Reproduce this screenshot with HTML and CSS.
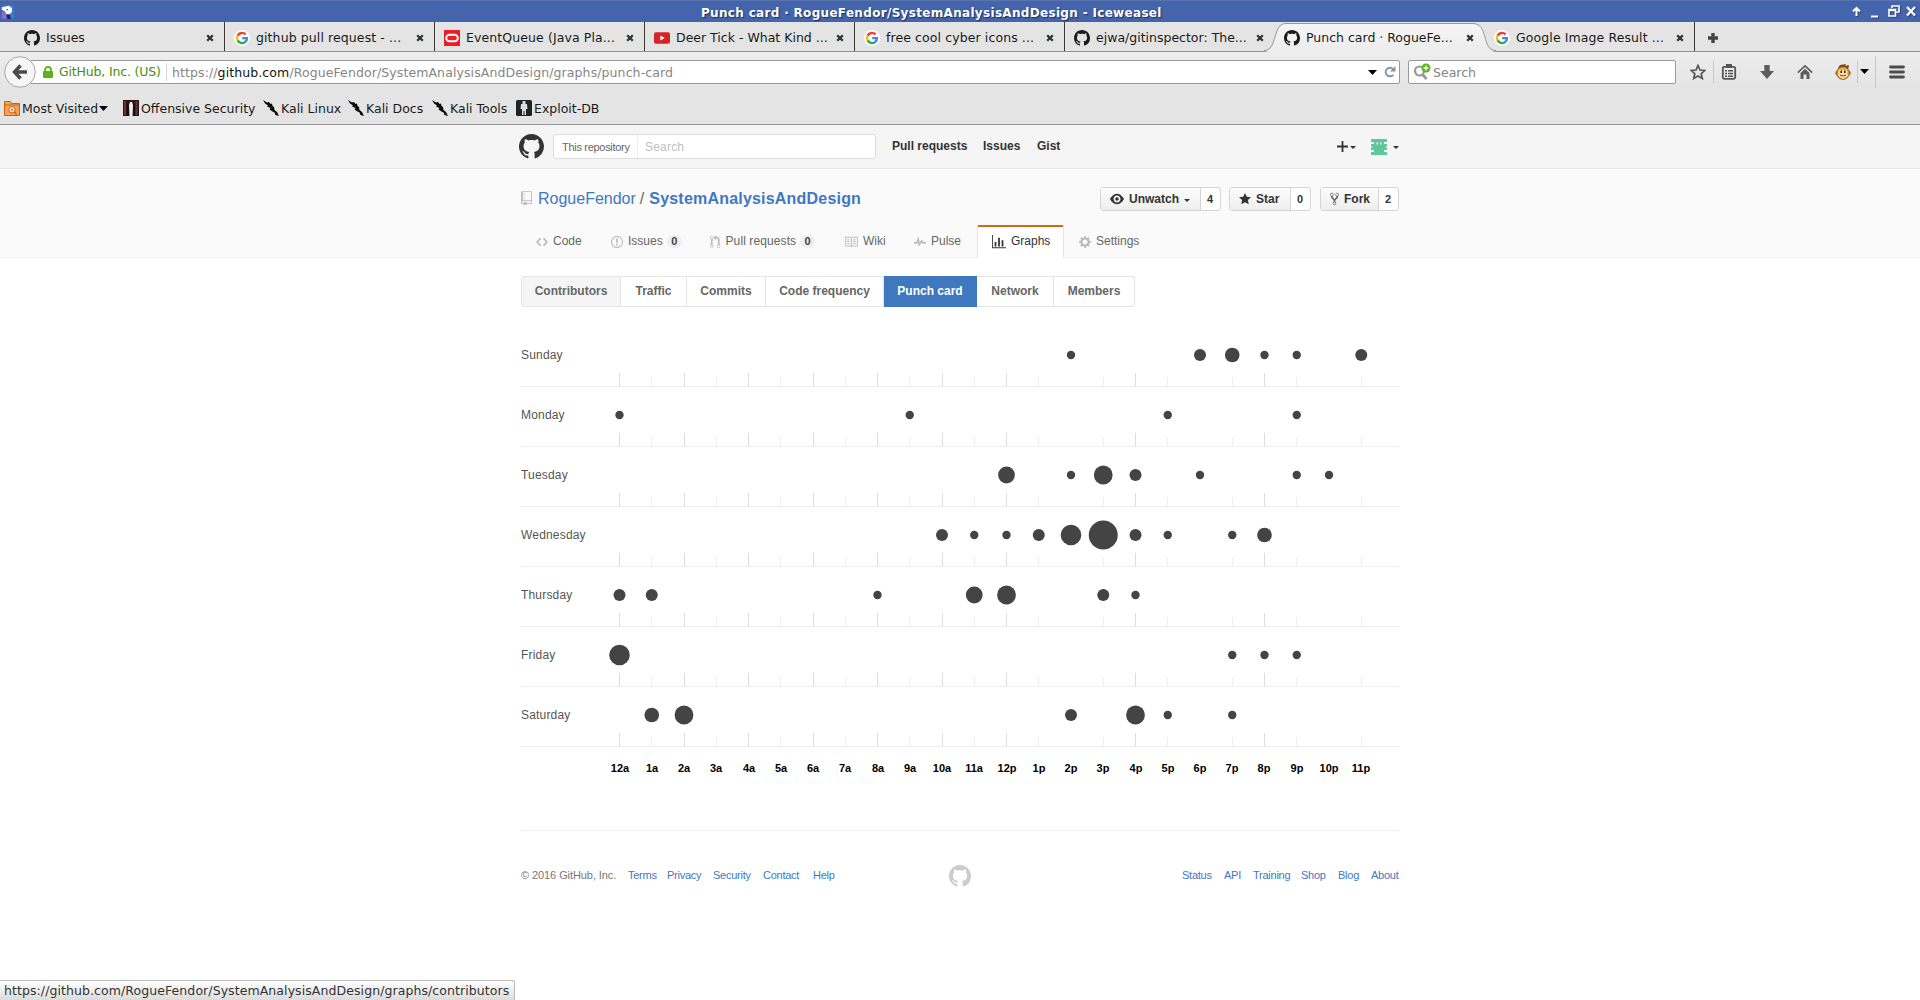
FILE: index.html
```html
<!DOCTYPE html>
<html lang="en">
<head>
<meta charset="utf-8">
<title>Punch card · RogueFendor/SystemAnalysisAndDesign</title>
<link rel="stylesheet" href="styles.css">
</head>
<body>
<svg class="sprite">
  <symbol id="mark" viewBox="0 0 16 16"><path d="M8 0C3.58 0 0 3.58 0 8c0 3.54 2.29 6.53 5.47 7.59.4.07.55-.17.55-.38 0-.19-.01-.82-.01-1.49-2.01.37-2.53-.49-2.69-.94-.09-.23-.48-.94-.82-1.13-.28-.15-.68-.52-.01-.53.63-.01 1.08.58 1.23.82.72 1.21 1.87.87 2.33.66.07-.52.28-.87.51-1.07-1.78-.2-3.64-.89-3.64-3.95 0-.87.31-1.59.82-2.15-.08-.2-.36-1.02.08-2.12 0 0 .67-.21 2.2.82.64-.18 1.32-.27 2-.27.68 0 1.36.09 2 .27 1.53-1.04 2.2-.82 2.2-.82.44 1.1.16 1.92.08 2.12.51.56.82 1.27.82 2.15 0 3.07-1.87 3.75-3.65 3.95.29.25.54.73.54 1.48 0 1.07-.01 1.93-.01 2.2 0 .21.15.46.55.38A8.013 8.013 0 0016 8c0-4.42-3.58-8-8-8z"/></symbol>
  <symbol id="google" viewBox="0 0 16 16"><circle cx="8" cy="8" r="8" fill="#fff"/><g fill="none" stroke-width="2.4"><path stroke="#ea4335" d="M3.6 5.6A5 5 0 0 1 11.6 4.4"/><path stroke="#fbbc05" d="M3.6 10.4A5 5 0 0 1 3.6 5.6"/><path stroke="#34a853" d="M11.4 11.8A5 5 0 0 1 3.6 10.4"/><path stroke="#4285f4" d="M8.2 8.1H13A5 5 0 0 1 11.3 11.8"/></g></symbol>
  <symbol id="oracle" viewBox="0 0 16 16"><path fill="#ee1c25" d="M0 0h16v16H0z"/><rect x="2.2" y="4.7" width="11.6" height="6.6" rx="3.3" fill="none" stroke="#fff" stroke-width="2"/></symbol>
  <symbol id="youtube" viewBox="0 0 16 16"><rect y="2.3" width="16" height="11.5" rx="2" fill="#d42428"/><path fill="#fff" d="M6.4 5.6v4.8L10.6 8z"/></symbol>
  <symbol id="close" viewBox="0 0 8 8"><path d="M1.2 1.2l5.6 5.6M6.8 1.2L1.2 6.8" stroke="#2e3436" stroke-width="2.3"/></symbol>
  <symbol id="kali" viewBox="0 0 16 16"><path fill="#0a0a0a" d="M0 0l4 2.500L6 2l1.500 2L9 3.500l.5 2.500 1.500 1 .5 3 2.500 2L16 16l-3.500-1-1-2.500-2-1L6.500 9.500l1-1.500L4 6.500l1-1L2 3.500z"/></symbol>
  <symbol id="repo" viewBox="0 0 12 16"><path d="M4 9H3V8h1v1zm0-3H3v1h1V6zm0-2H3v1h1V4zm0-2H3v1h1V2zm8-1v12c0 .55-.45 1-1 1H6v2l-1.500-1.500L3 16v-2H1c-.55 0-1-.45-1-1V1c0-.55.45-1 1-1h10c.55 0 1 .45 1 1zm-1 10H1v2h2v-1h3v1h5v-2zm0-10H2v9h9V1z"/></symbol>
  <symbol id="eye" viewBox="0 0 16 16"><path d="M8.060 2C3 2 0 8 0 8s3 6 8.060 6C13 14 16 8 16 8s-3-6-7.940-6zM8 12c-2.200 0-4-1.780-4-4 0-2.200 1.800-4 4-4 2.220 0 4 1.800 4 4 0 2.220-1.780 4-4 4zm2-4c0 1.110-.89 2-2 2-1.110 0-2-.89-2-2 0-1.110.89-2 2-2 1.110 0 2 .89 2 2z"/></symbol>
  <symbol id="star" viewBox="0 0 14 16"><path d="M14 6l-4.900-.64L7 1 4.900 5.360 0 6l3.600 3.260L2.670 14 7 11.670 11.330 14l-.93-4.740z"/></symbol>
  <symbol id="fork" viewBox="0 0 10 16"><path d="M8 1a1.993 1.993 0 0 0-1 3.720V6L5 8 3 6V4.720A1.993 1.993 0 0 0 2 1a1.993 1.993 0 0 0-1 3.720V6.500l3 3v1.780A1.993 1.993 0 0 0 5 15a1.993 1.993 0 0 0 1-3.720V9.500l3-3V4.720A1.993 1.993 0 0 0 8 1zM2 4.200C1.340 4.200.8 3.650.8 3c0-.65.55-1.200 1.200-1.200.65 0 1.200.55 1.200 1.200 0 .65-.55 1.200-1.200 1.200zm3 10c-.66 0-1.200-.55-1.200-1.200 0-.65.55-1.200 1.200-1.200.65 0 1.200.55 1.200 1.200 0 .65-.55 1.200-1.200 1.200zm3-10c-.66 0-1.200-.55-1.200-1.200 0-.65.55-1.200 1.200-1.200.65 0 1.200.55 1.200 1.200 0 .65-.55 1.200-1.200 1.200z"/></symbol>
  <symbol id="code" viewBox="0 0 14 16"><path d="M9.500 3L8 4.500 11.500 8 8 11.500 9.500 13 14 8 9.500 3zm-5 0L0 8l4.500 5L6 11.500 2.500 8 6 4.500 4.500 3z"/></symbol>
  <symbol id="issue" viewBox="0 0 14 16"><path d="M7 2.300c3.140 0 5.700 2.560 5.700 5.700s-2.560 5.700-5.700 5.700A5.710 5.710 0 0 1 1.300 8c0-3.140 2.560-5.700 5.700-5.700zM7 1C3.140 1 0 4.140 0 8s3.140 7 7 7 7-3.140 7-7-3.140-7-7-7zm1 3H6v5h2V4zm0 6H6v2h2v-2z"/></symbol>
  <symbol id="pull" viewBox="0 0 12 16"><path d="M11 11.280V5c-.03-.78-.34-1.470-.94-2.060C9.460 2.350 8.780 2.030 8 2H7V0L4 3l3 3V4h1c.27.02.48.11.69.31.21.2.3.42.31.69v6.280A1.993 1.993 0 0 0 10 15a1.993 1.993 0 0 0 1-3.720zm-1 2.920c-.66 0-1.200-.55-1.200-1.200 0-.65.55-1.200 1.200-1.200.65 0 1.200.55 1.200 1.200 0 .65-.55 1.200-1.200 1.200zM4 3c0-1.110-.89-2-2-2a1.993 1.993 0 0 0-1 3.720v6.560A1.993 1.993 0 0 0 2 15a1.993 1.993 0 0 0 1-3.720V4.720c.59-.34 1-.98 1-1.720zm-.8 10c0 .66-.55 1.200-1.200 1.200-.65 0-1.200-.55-1.200-1.200 0-.65.55-1.200 1.200-1.200.65 0 1.200.55 1.200 1.200zM2 4.200C1.340 4.200.8 3.650.8 3c0-.65.55-1.200 1.200-1.200.65 0 1.200.55 1.200 1.200 0 .65-.55 1.200-1.200 1.200z"/></symbol>
  <symbol id="book" viewBox="0 0 16 16"><path d="M3 5h4v1H3V5zm0 3h4V7H3v1zm0 2h4V9H3v1zm11-5h-4v1h4V5zm0 2h-4v1h4V7zm0 2h-4v1h4V9zm2-6v9c0 .55-.45 1-1 1H9.500l-1 1-1-1H2c-.55 0-1-.45-1-1V3c0-.55.45-1 1-1h5.500l1 1 1-1H15c.55 0 1 .45 1 1zm-8 .5L7.500 3H2v9h6V3.500zm7-.5H9.500l-.5.5V12h6V3z"/></symbol>
  <symbol id="pulse" viewBox="0 0 14 16"><path d="M11.500 8L8.800 5.400 6.600 8.500 5.500 1.600 2.380 8H0v2h3.600l.9-1.800.9 5.400L9 8.500l1.600 1.500H14V8z"/></symbol>
  <symbol id="graph" viewBox="0 0 16 16"><path d="M16 14v1H0V0h1v14h15zM5 13H3V8h2v5zm4 0H7V3h2v10zm4 0h-2V6h2v7z"/></symbol>
  <symbol id="gear" viewBox="0 0 14 16"><path d="M14 8.770v-1.600l-1.940-.64-.45-1.090.88-1.840-1.130-1.130-1.810.91-1.090-.45-.69-1.920h-1.600l-.63 1.940-1.110.45-1.840-.88-1.130 1.130.91 1.810-.45 1.090L0 7.230v1.590l1.940.64.45 1.090-.88 1.840 1.130 1.130 1.810-.91 1.090.45.69 1.920h1.590l.63-1.940 1.110-.45 1.840.88 1.130-1.130-.92-1.810.47-1.090L14 8.750v.02zM7 11c-1.660 0-3-1.340-3-3s1.340-3 3-3 3 1.340 3 3-1.340 3-3 3z"/></symbol>
</svg>

<header class="titlebar">
  <svg class="app-icon" viewBox="0 0 16 18"><rect width="16" height="18" rx="2" fill="#3a7bc8"/><path fill="#8d6cc9" d="M0 9h6v9H0z"/><path fill="#1c2a6b" d="M6 11l4 1 2 6H7z"/><path fill="#fff" d="M0 3l5-1 4-1 4 3v5l-3 3H6L4 8 0 6z"/><circle cx="7" cy="6" r=".9" fill="#223"/></svg>
  <span class="title">Punch card · RogueFendor/SystemAnalysisAndDesign - Iceweasel</span>
  <svg class="window-buttons" viewBox="0 0 68 14"><g fill="none" stroke="#fff" stroke-width="2"><path d="M6.500 12V4M3 7.500L6.500 4 10 7.500"/><path d="M21 12.500h7"/><path stroke-width="1.600" d="M42 4V2h7v6h-2.500M39 5.500h6.500V12H39zM39 6.500h6"/><path stroke-width="2.300" d="M57 3l8 8.500M65 3l-8 8.500"/></g></svg>
</header>

<nav class="tabs">
  <div class="tab"><svg class="fav"><use href="#mark"/></svg><span class="label">Issues</span><svg class="x"><use href="#close"/></svg></div>
  <div class="tab"><svg class="fav"><use href="#google"/></svg><span class="label wide">github pull request - ...</span><svg class="x"><use href="#close"/></svg></div>
  <div class="tab"><svg class="fav"><use href="#oracle"/></svg><span class="label wide">EventQueue (Java Pla...</span><svg class="x"><use href="#close"/></svg></div>
  <div class="tab"><svg class="fav"><use href="#youtube"/></svg><span class="label">Deer Tick - What Kind ...</span><svg class="x"><use href="#close"/></svg></div>
  <div class="tab"><svg class="fav"><use href="#google"/></svg><span class="label wide">free cool cyber icons ...</span><svg class="x"><use href="#close"/></svg></div>
  <div class="tab before-active"><svg class="fav"><use href="#mark"/></svg><span class="label">ejwa/gitinspector: The...</span><svg class="x"><use href="#close"/></svg></div>
  <div class="tab active">
    <svg class="tab-shape" viewBox="0 0 240 30"><defs><linearGradient id="tabfill" x1="0" y1="0" x2="0" y2="1"><stop offset="0" stop-color="#f6f6f6"/><stop offset="1" stop-color="#ececec"/></linearGradient></defs><path fill="url(#tabfill)" d="M0 30C14 29 8 1.500 22 1.500H210C226 1.500 217 29 232 30z"/><path fill="none" stroke="#979797" d="M0 28.500C14 28.500 8 1.500 22 1.500H209C225 1.500 217 28.500 232 28.500"/></svg>
    <svg class="fav"><use href="#mark"/></svg><span class="label">Punch card · RogueFe...</span><svg class="x"><use href="#close"/></svg></div>
  <div class="tab"><svg class="fav"><use href="#google"/></svg><span class="label wide">Google Image Result ...</span><svg class="x"><use href="#close"/></svg></div>
  <svg class="new-tab" viewBox="0 0 10 10"><path fill="#444" d="M3.300 0h3.400v3.300H10v3.400H6.700V10H3.300V6.700H0V3.300h3.300z"/></svg>
</nav>

<div class="toolbar">
  <svg class="back" viewBox="0 0 32 32"><circle cx="16" cy="16" r="15.300" fill="#f6f6f6" stroke="#a2a6ab"/><path fill="none" stroke="#4c4c4c" stroke-width="3.400" d="M16.500 9.500L10.500 16l6 6.500M11 16h12"/></svg>
  <div class="urlbar">
    <svg class="lock" viewBox="0 0 10 12"><rect y="5" width="10" height="7" rx="1" fill="#5db11b"/><path fill="none" stroke="#5db11b" stroke-width="1.800" d="M2 6V4a3 3 0 0 1 6 0v2"/></svg>
    <span class="owner">GitHub, Inc. (US)</span>
    <span class="url">https://<b>github.com</b>/RogueFendor/SystemAnalysisAndDesign/graphs/punch-card</span>
    <svg class="drop" viewBox="0 0 9 5"><path d="M0 0h9L4.500 5z"/></svg>
    <svg class="reload" viewBox="0 0 12 12"><path fill="none" stroke="#8796a5" stroke-width="2" d="M9.300 8.800A4.300 4.300 0 1 1 9 3"/><path fill="#8796a5" d="M11.500 0v5.500H6z"/></svg>
  </div>
  <div class="searchbar">
    <svg class="lens" viewBox="0 0 18 18"><circle cx="6.500" cy="8" r="4.500" fill="none" stroke="#999" stroke-width="2.200"/><path stroke="#999" stroke-width="2.800" d="M9.500 11.500l4 4.500"/><circle cx="13" cy="5" r="4.500" fill="#5cb616"/><path stroke="#fff" stroke-width="1.300" d="M13 2.500v5M10.500 5h5"/></svg>
    <span>Search</span>
  </div>
  <div class="tools">
    <svg viewBox="0 0 16 16"><path fill="none" stroke="#555" stroke-width="1.700" d="M8 1.500l2 4.500 4.800.5-3.600 3.200 1.100 4.800L8 12l-4.300 2.500 1.100-4.800L1.200 6.500 6 6z"/></svg>
    <i class="sep"></i>
    <svg viewBox="0 0 16 16"><rect x="1.800" y="2.800" width="12.400" height="12" rx="1.500" fill="none" stroke="#555" stroke-width="1.800"/><path fill="#555" d="M5 0h6v4H5zM4 6h2v1.500H4zM7 6h5v1.500H7zM4 8.700h2v1.500H4zM7 8.700h5v1.500H7zM4 11.400h2v1.500H4zM7 11.400h5v1.500H7z"/></svg>
    <svg viewBox="0 0 16 16"><path fill="#5c5c5c" d="M5.300 1h5.400v6H15L8 15 1 7h4.300z"/></svg>
    <svg viewBox="0 0 16 16"><path fill="none" stroke="#5c5c5c" stroke-width="1.700" d="M.8 8.700L8 2l7.200 6.700"/><path fill="#5c5c5c" d="M3.500 9L8 4.800 12.500 9v6H9.500v-4.500h-3V15h-3z"/></svg>
    <svg viewBox="0 0 16 16"><path fill="#7a4415" d="M3 4l2-3 6-1-1 2 4-1-1 5z"/><circle cx="2" cy="9" r="2" fill="#c98735"/><circle cx="14" cy="9" r="2" fill="#c98735"/><circle cx="8" cy="9" r="6.300" fill="#eda84a" stroke="#8b5318"/><path fill="#ffe2a3" d="M4 6h8l.500 6-4.500 3-4.500-3z"/><path fill="#222" d="M5.500 6.500H7V9H5.500zM9 6.500h1.500V9H9z"/><path fill="none" stroke="#8b3c10" d="M5 11q3 2 6 0"/></svg>
    <i class="sep"></i>
    <svg class="drop" viewBox="0 0 9 5"><path d="M0 0h9L4.500 5z"/></svg>
    <i class="sep tall"></i>
    <svg viewBox="0 0 16 16"><path stroke="#4c4c4c" stroke-width="2.800" stroke-linecap="round" d="M1.500 3h13M1.500 8h13M1.500 13h13"/></svg>
  </div>
</div>

<div class="bookmarks">
  <a><svg viewBox="0 0 16 16"><path fill="#f3a45a" stroke="#c8640f" d="M.5 15.500v-14h6l1 2h8v12z"/><path stroke="#c8640f" d="M1 5h14"/><circle cx="8" cy="9.800" r="3.200" fill="#fde3c8" stroke="#c8640f"/><circle cx="8" cy="9.800" r="1" fill="#c8640f"/><path stroke="#c8640f" stroke-width="1.500" d="M10.500 12l2 2.500"/></svg><span>Most Visited</span><svg class="drop" viewBox="0 0 9 5"><path d="M0 0h9L4.500 5z"/></svg></a>
  <a><svg viewBox="0 0 16 16"><path fill="#2a1414" d="M0 0h16v16H0z"/><path fill="#6b3430" d="M1 1h2v14H1zM12.500 1h2v14h-2z"/><path fill="#eee" d="M7 2h2l1 3-.5 11h-3L6 5z"/><path fill="#111" d="M4 4h1.500v12H4zM10.500 4H12v12h-1.500z"/></svg><span>Offensive Security</span></a>
  <a><svg><use href="#kali"/></svg><span>Kali Linux</span></a>
  <a><svg><use href="#kali"/></svg><span>Kali Docs</span></a>
  <a><svg><use href="#kali"/></svg><span>Kali Tools</span></a>
  <a><svg viewBox="0 0 16 16"><rect width="16" height="16" rx="1.500" fill="#202225"/><path fill="#ddd" d="M6.500 1h3v3H11l.500 5h-1.500v6H8.500v-4h-1v4H6V9H4.500L5 4h1.500z"/></svg><span>Exploit-DB</span></a>
</div>

<div class="gh-header">
  <div class="wrap">
    <svg class="logo"><use href="#mark"/></svg>
    <div class="gh-search"><span class="scope">This repository</span><span class="field">Search</span></div>
    <nav class="gh-nav"><a>Pull requests</a><a>Issues</a><a>Gist</a></nav>
    <div class="user">
      <svg class="plus" viewBox="0 0 11 11"><path fill="#333" d="M4.600 0h1.800v4.600H11v1.800H6.400V11H4.600V6.400H0V4.600h4.600z"/></svg><i class="caret"></i>
      <svg class="avatar" viewBox="0 0 16 16"><path fill="#5fc79b" d="M0 0h16v3h-3v2h3v6h-3v2h3v3H0v-3h3v-2H0V5h3V3H0z"/><path fill="#f5f5f5" d="M5.500 3.500h1.500v2H5.500zM9 3.500h1.500v2H9zM0 7.500h1.500v1H0zM14.500 7.500H16v1h-1.500z"/></svg><i class="caret"></i>
    </div>
  </div>
</div>

<div class="repo-head">
  <div class="wrap repo-title">
    <svg class="repo-icon"><use href="#repo"/></svg>
    <h1><a>RogueFendor</a><span>/</span><a class="name">SystemAnalysisAndDesign</a></h1>
    <div class="actions">
      <div class="btn-group watch"><span class="btn"><svg class="w14"><use href="#eye"/></svg>Unwatch<i class="caret"></i></span><span class="count">4</span></div>
      <div class="btn-group stars"><span class="btn"><svg class="w12"><use href="#star"/></svg>Star</span><span class="count">0</span></div>
      <div class="btn-group forks"><span class="btn"><svg class="w9"><use href="#fork"/></svg>Fork</span><span class="count">2</span></div>
    </div>
  </div>
  <nav class="wrap repo-nav">
    <a><svg class="w12"><use href="#code"/></svg>Code</a>
    <a><svg class="w12"><use href="#issue"/></svg>Issues<em>0</em></a>
    <a><svg class="w10"><use href="#pull"/></svg>Pull requests<em>0</em></a>
    <a><svg class="w14"><use href="#book"/></svg>Wiki</a>
    <a><svg class="w12"><use href="#pulse"/></svg>Pulse</a>
    <a class="selected"><svg class="w14"><use href="#graph"/></svg>Graphs</a>
    <a><svg class="w12"><use href="#gear"/></svg>Settings</a>
  </nav>
</div>

<main class="wrap">
  <nav class="subnav"><a class="hover">Contributors</a><a>Traffic</a><a>Commits</a><a>Code frequency</a><a class="selected">Punch card</a><a>Network</a><a>Members</a></nav>

  <svg class="punchcard" viewBox="0 0 878 470">
    <defs>
      <g id="axis">
        <path class="rule" d="M0 59.500H878"/>
        <path class="even" d="M98.500 46v13M163.500 46v13M227.500 46v13M292.500 46v13M356.500 46v13M421.500 46v13M485.500 46v13M614.500 46v13M743.500 46v13"/>
        <path class="odd" d="M130.500 50v9M195.500 50v9M259.500 50v9M324.500 50v9M388.500 50v9M453.500 50v9M517.500 50v9M582.500 50v9M646.500 50v9M711.500 50v9M775.500 50v9M840.500 50v9"/>
      </g>
    </defs>
    <g transform="translate(0 0)"><text y="32">Sunday</text><use href="#axis"/><circle cx="550" cy="28" r="4.200"/><circle cx="679" cy="28" r="6"/><circle cx="711.250" cy="28" r="7.300"/><circle cx="743.500" cy="28" r="4.200"/><circle cx="775.750" cy="28" r="4.200"/><circle cx="840.250" cy="28" r="6"/></g>
    <g transform="translate(0 60)"><text y="32">Monday</text><use href="#axis"/><circle cx="98.500" cy="28" r="4.200"/><circle cx="388.750" cy="28" r="4.200"/><circle cx="646.750" cy="28" r="4.200"/><circle cx="775.750" cy="28" r="4.200"/></g>
    <g transform="translate(0 120)"><text y="32">Tuesday</text><use href="#axis"/><circle cx="485.500" cy="28" r="8.400"/><circle cx="550" cy="28" r="4.200"/><circle cx="582.250" cy="28" r="9.400"/><circle cx="614.500" cy="28" r="6"/><circle cx="679" cy="28" r="4.200"/><circle cx="775.750" cy="28" r="4.200"/><circle cx="808" cy="28" r="4.200"/></g>
    <g transform="translate(0 180)"><text y="32">Wednesday</text><use href="#axis"/><circle cx="421" cy="28" r="6"/><circle cx="453.250" cy="28" r="4.200"/><circle cx="485.500" cy="28" r="4.200"/><circle cx="517.750" cy="28" r="6"/><circle cx="550" cy="28" r="10.300"/><circle cx="582.250" cy="28" r="14.500"/><circle cx="614.500" cy="28" r="6"/><circle cx="646.750" cy="28" r="4.200"/><circle cx="711.250" cy="28" r="4.200"/><circle cx="743.500" cy="28" r="7.300"/></g>
    <g transform="translate(0 240)"><text y="32">Thursday</text><use href="#axis"/><circle cx="98.500" cy="28" r="6"/><circle cx="130.750" cy="28" r="6"/><circle cx="356.500" cy="28" r="4.200"/><circle cx="453.250" cy="28" r="8.400"/><circle cx="485.500" cy="28" r="9.400"/><circle cx="582.250" cy="28" r="6"/><circle cx="614.500" cy="28" r="4.200"/></g>
    <g transform="translate(0 300)"><text y="32">Friday</text><use href="#axis"/><circle cx="98.500" cy="28" r="10.300"/><circle cx="711.250" cy="28" r="4.200"/><circle cx="743.500" cy="28" r="4.200"/><circle cx="775.750" cy="28" r="4.200"/></g>
    <g transform="translate(0 360)"><text y="32">Saturday</text><use href="#axis"/><circle cx="130.750" cy="28" r="7.300"/><circle cx="163" cy="28" r="9.400"/><circle cx="550" cy="28" r="6"/><circle cx="614.500" cy="28" r="9.400"/><circle cx="646.750" cy="28" r="4.200"/><circle cx="711.250" cy="28" r="4.200"/></g>
    <g class="hours">
      <text x="99" y="445">12a</text><text x="131" y="445">1a</text><text x="163" y="445">2a</text><text x="195" y="445">3a</text><text x="228" y="445">4a</text><text x="260" y="445">5a</text><text x="292" y="445">6a</text><text x="324" y="445">7a</text><text x="357" y="445">8a</text><text x="389" y="445">9a</text><text x="421" y="445">10a</text><text x="453" y="445">11a</text>
      <text x="486" y="445">12p</text><text x="518" y="445">1p</text><text x="550" y="445">2p</text><text x="582" y="445">3p</text><text x="615" y="445">4p</text><text x="647" y="445">5p</text><text x="679" y="445">6p</text><text x="711" y="445">7p</text><text x="743" y="445">8p</text><text x="776" y="445">9p</text><text x="808" y="445">10p</text><text x="840" y="445">11p</text>
    </g>
  </svg>
</main>

<footer class="wrap footer">
  <div class="legal"><span>© 2016 GitHub, Inc.</span><a>Terms</a><a>Privacy</a><a>Security</a><a>Contact</a><a>Help</a></div>
  <svg class="foot-mark"><use href="#mark"/></svg>
  <div class="links"><a>Status</a><a>API</a><a>Training</a><a>Shop</a><a>Blog</a><a>About</a></div>
</footer>

<div class="status">https://github.com/RogueFendor/SystemAnalysisAndDesign/graphs/contributors</div>
</body>
</html>
```
FILE: styles.css
```css
* { box-sizing: border-box; }
html, body { height: 100%; overflow: hidden; }
body { margin: 0; background: #fff; font: 12px "Liberation Sans", Arial, sans-serif; color: #333; }
.sprite { display: none; }
svg { flex: none; display: block; }

/* Browser window */
.titlebar, .tabs, .toolbar, .bookmarks, .status { font-family: "DejaVu Sans", sans-serif; font-size: 12.5px; color: #1a1a1a; white-space: pre; }
.titlebar { position: relative; height: 22px; padding-left: 701px; background: #4464ac; border-top: 1px solid #5873ae; display: flex; align-items: center; }
.app-icon { position: absolute; left: 0; top: 4px; width: 16px; height: 14px; }
.title { margin-top: 2px; font-weight: bold; font-size: 12px; letter-spacing: .32px; color: #fff; text-shadow: 1px 1px 1px #1c2e5c; }
.window-buttons { position: absolute; left: 1850px; top: 3px; width: 68px; height: 14px; filter: drop-shadow(1px 1px 0 #2a4178); }

.tabs { height: 30px; padding-left: 15px; background: #e4e4e4; border-bottom: 1px solid #8f8f8f; display: flex; }
.tab { position: relative; width: 210px; height: 29px; padding: 2px 0 0 9px; border-right: 1px solid #3c3933; display: flex; align-items: center; }
.tab.before-active, .tab.active { border-right-color: transparent; }
.tab.active { height: 30px; padding-bottom: 1px; }
.tab-shape { position: absolute; left: -11px; top: 0; width: 240px; height: 30px; }
.fav { position: relative; width: 16px; height: 16px; fill: #1b1b1b; }
.label { position: relative; width: 155px; margin: -1px 0 0 6px; }
.label.wide { letter-spacing: .1px; }
.x { position: relative; width: 8px; height: 8px; margin-left: 5px; }
.new-tab { width: 10px; height: 10px; margin: 11px 0 0 13px; }

.toolbar { height: 38px; padding-left: 4px; background: linear-gradient(#ededed, #e4e4e4); display: flex; align-items: center; }
.back { position: relative; width: 32px; height: 32px; margin-top: 2px; }
.urlbar, .searchbar { height: 24px; margin-top: 2px; background: #fff; border: 1px solid #999; border-radius: 2px; display: flex; align-items: center; }
.urlbar { width: 1370px; margin-left: -6px; padding-left: 12px; }
.lock { width: 10px; height: 12px; }
.owner { width: 108px; margin-left: 6px; color: #458f0b; letter-spacing: -.16px; border-right: 1px solid #d5d5d5; line-height: 18px; }
.url { width: 1196px; margin-left: 5px; color: #858585; letter-spacing: .1px; }
.url b { font-weight: normal; color: #111; }
.drop { width: 9px; height: 5px; fill: #000; }
.reload { width: 12px; height: 12px; margin-left: 7px; }
.searchbar { width: 268px; margin-left: 8px; padding-left: 4px; color: #858585; }
.lens { width: 18px; height: 18px; margin-right: 2px; }
.tools { display: grid; grid-template-columns: 23px 8px 38px 38px 38px 22px 3px 15px 14px 16px; padding: 1px 0 0 14px; align-items: center; }
.tools svg { width: 16px; height: 16px; }
.tools .drop { width: 9px; height: 5px; }
.sep { width: 1px; height: 22px; background: #c5c9cd; }
.sep.tall { height: 32px; }

.bookmarks { height: 35px; padding: 2px 0 0 4px; background: #e4e4e4; border-bottom: 1px solid #979797; display: grid; grid-template-columns: 119px 140px 85px 84px 84px 120px; align-items: center; }
.bookmarks a { display: flex; align-items: center; gap: 2px; }
.bookmarks svg { width: 16px; height: 16px; }
.bookmarks .drop { width: 9px; height: 5px; margin-left: -1px; }

.status { position: absolute; left: 0; bottom: 0; width: 515px; height: 20px; padding-left: 4px; line-height: 20px; letter-spacing: .08px; color: #333; background: linear-gradient(#fff, #dcdcdc); border: solid #bbb; border-width: 1px 1px 0 0; border-radius: 0 3px 0 0; }

/* GitHub page */
.wrap { width: 878px; margin: 0 auto; }
.caret { width: 0; height: 0; border: 3px solid transparent; border-top-color: #333; border-bottom: 0; }
.w14 { width: 14px; height: 14px; }
.w12 { width: 12px; height: 14px; }
.w10 { width: 10.500px; height: 14px; }
.w9 { width: 9px; height: 14px; }

.gh-header { height: 44px; background: #f5f5f5; border-bottom: 1px solid #e5e5e5; }
.gh-header .wrap { height: 43px; display: flex; align-items: center; }
.logo { width: 25px; height: 25px; margin-left: -2px; fill: #333; }
.gh-search { width: 323px; height: 25px; margin-left: 9px; background: #fff; border: 1px solid #ddd; border-radius: 3px; display: flex; line-height: 24px; }
.scope { width: 84px; padding-left: 8px; font-size: 11px; letter-spacing: -.3px; color: #666; border-right: 1px solid #eee; }
.field { padding-left: 7px; letter-spacing: .2px; color: #c0c0c0; }
.gh-nav { width: 445px; margin: -1px 0 0 16px; display: grid; grid-template-columns: 91px 54px 60px; font-weight: bold; }
.user { display: grid; grid-template-columns: 13px 21px 22px 6px; align-items: center; }
.plus { width: 11px; height: 11px; }
.avatar { width: 16px; height: 16px; }
.user .caret { margin-top: 2px; }

.repo-head { height: 89px; background: #fafafa; border-bottom: 1px solid #eee; }
.repo-title { height: 56px; padding-top: 16px; display: flex; align-items: flex-start; }
.repo-icon { width: 11px; height: 15px; margin-top: 6px; fill: #bbb; }
.repo-title h1 { width: 562px; margin: 5px 0 0 6px; font-size: 16px; line-height: 18px; font-weight: normal; color: #4078c0; display: flex; }
.repo-title h1 span { margin: 0 5px 0 4px; color: #666; }
.name { font-weight: bold; letter-spacing: .2px; }
.actions { display: flex; padding-top: 2px; }
.btn-group { height: 24px; border: 1px solid #d5d5d5; border-radius: 3px; background: #fff; display: flex; font-weight: bold; line-height: 22px; }
.watch { width: 121px; margin-right: 8px; }
.stars { width: 82px; margin-right: 9px; }
.forks { width: 79px; }
.btn { flex: 1; padding-left: 9px; display: flex; align-items: center; background: linear-gradient(#fcfcfc, #eee); border-right: 1px solid #d5d5d5; fill: #333; }
.btn svg { margin-right: 5px; }
.btn .caret { margin: 2px 0 0 5px; }
.count { width: 19px; padding-right: 1px; text-align: center; font-size: 11px; }
.forks .btn svg { fill: #666; }

.repo-nav { height: 33px; display: grid; grid-template-columns: 75px 99px 134px 70px 78px 87px 80px; color: #666; fill: #bbb; }
.repo-nav a { height: 33px; padding: 0 0 2px 15px; display: flex; align-items: center; }
.repo-nav svg { margin: 2px 5px 0 0; }
.repo-nav em { width: 15px; height: 13px; margin: 1px 0 0 4px; border-radius: 7px; background: #eee; font: bold 11px/13px "Liberation Sans", sans-serif; text-align: center; color: #444; }
.repo-nav a:nth-child(3) { letter-spacing: .1px; }
.repo-nav .selected { padding: 0 0 4px 14px; background: #fff; border: 1px solid #e5e5e5; border-width: 2px 1px 0; border-top-color: #d26911; border-radius: 2px 2px 0 0; color: #333; fill: #333; }

main { height: 572px; padding-top: 18px; }
.subnav { width: 614px; height: 31px; display: grid; grid-template-columns: 100px 66px 79px 118px 93px 77px 81px; font-weight: bold; line-height: 28px; color: #666; text-align: center; }
.subnav a { border: solid #e5e5e5; border-width: 1px 1px 1px 0; }
.subnav .hover { background: #f5f5f5; border-left-width: 1px; border-radius: 3px 0 0 3px; }
.subnav a:last-child { border-radius: 0 3px 3px 0; }
.subnav .selected { background: #4078c0; border-color: #4078c0; color: #fff; }
.punchcard { width: 878px; height: 470px; margin-top: 20px; fill: #444; }
.rule { stroke: #eee; }
.even { stroke: #ddd; }
.odd { stroke: #eee; }
.punchcard text { font-size: 12px; letter-spacing: .18px; fill: #555; }
.punchcard .hours text { font-size: 11px; letter-spacing: 0; font-weight: bold; text-anchor: middle; fill: #000; }

.footer { height: 56px; border-top: 1px solid #eee; padding-top: 34px; display: flex; align-items: flex-start; font-size: 11px; letter-spacing: -.25px; color: #4078c0; line-height: 20px; }
.legal { width: 428px; display: grid; grid-template-columns: 107px 39px 46px 50px 50px 30px; }
.legal span { color: #767676; letter-spacing: -.08px; }
.foot-mark { width: 22px; height: 22px; fill: #ccc; }
.links { width: 428px; padding-left: 211px; display: grid; grid-template-columns: 42px 29px 48px 37px 33px 28px; }
```
